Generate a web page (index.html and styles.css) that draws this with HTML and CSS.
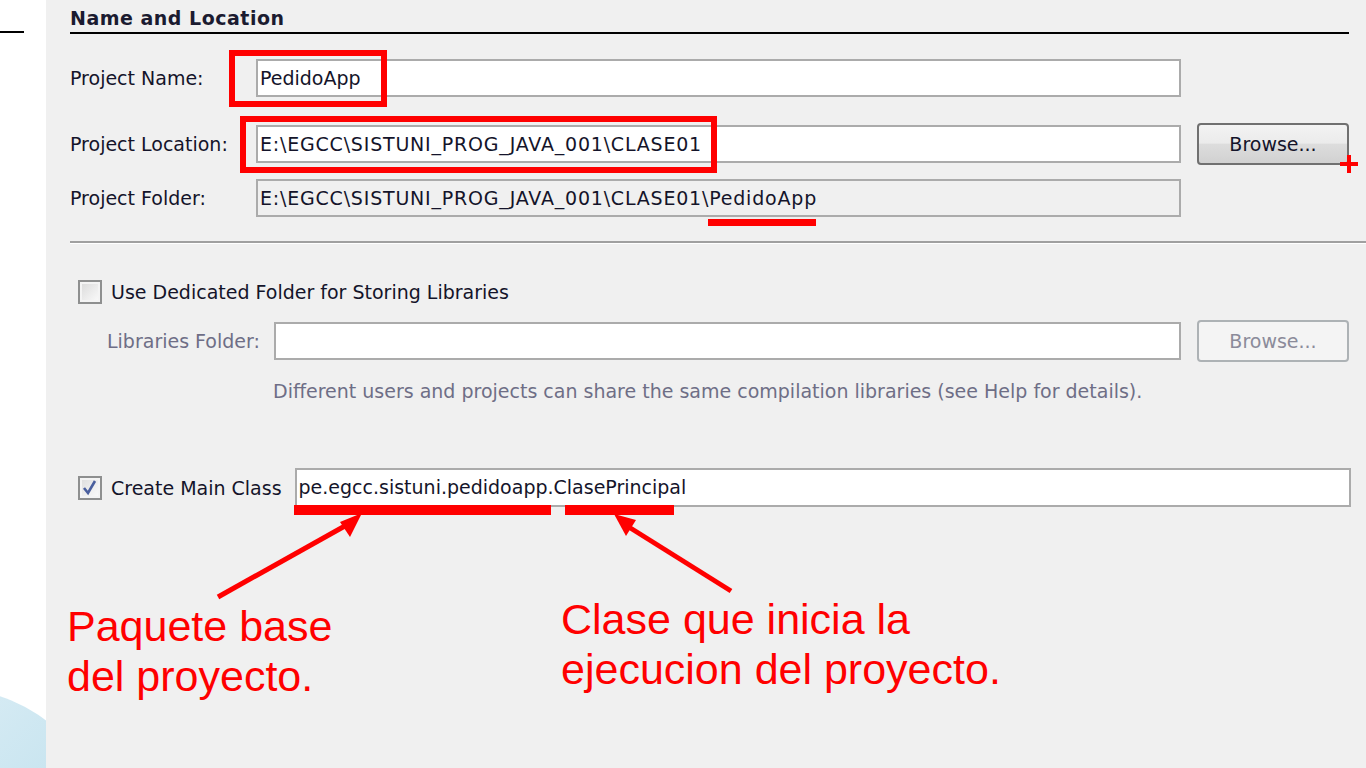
FILE: index.html
```html
<!DOCTYPE html>
<html>
<head>
<meta charset="utf-8">
<link rel="stylesheet" href="styles.css">
</head>
<body>
<div class="strip">
  <div class="strip-line"></div>
  <div class="bubble"></div>
</div>
<div class="panel">
  <div class="heading">Name and Location</div>

  <div class="row row-name">
    <label class="lbl">Project Name:</label>
    <div class="field">PedidoApp</div>
    <div class="side"></div>
  </div>

  <div class="row row-loc">
    <label class="lbl">Project Location:</label>
    <div class="field path">E:\EGCC\SISTUNI_PROG_JAVA_001\CLASE01</div>
    <div class="side"><button class="btn">Browse...</button></div>
  </div>

  <div class="row row-folder">
    <label class="lbl">Project Folder:</label>
    <div class="field field-ro path">E:\EGCC\SISTUNI_PROG_JAVA_001\CLASE01\PedidoApp</div>
    <div class="side"></div>
  </div>

  <div class="sep"></div>

  <div class="check-row row-ded">
    <span class="cb"></span>
    <span class="cb-label">Use Dedicated Folder for Storing Libraries</span>
  </div>

  <div class="row row-lib">
    <label class="lbl lbl-dis">Libraries Folder:</label>
    <div class="field"></div>
    <div class="side"><button class="btn btn-dis">Browse...</button></div>
  </div>

  <div class="desc">Different users and projects can share the same compilation libraries (see Help for details).</div>

  <div class="check-row row-main">
    <span class="cb cb-on"><svg viewBox="0 0 20 20" width="20" height="20"><path d="M4 10 L8 15 L15 3" fill="none" stroke="#4a5f9e" stroke-width="2.6"/></svg></span>
    <span class="cb-label">Create Main Class</span>
    <div class="field field-main">pe.egcc.sistuni.pedidoapp.ClasePrincipal</div>
  </div>

  <div class="note note-pkg">Paquete base<br>del proyecto.</div>
  <div class="note note-cls">Clase que inicia la<br>ejecucion del proyecto.</div>
</div>

<div class="mark box-name"></div>
<div class="mark box-loc"></div>
<div class="mark bar bar-folder"></div>
<div class="mark bar bar-pkg"></div>
<div class="mark bar bar-cls"></div>
<div class="mark plus-h"></div>
<div class="mark plus-v"></div>
<svg class="arrows" width="1366" height="768" viewBox="0 0 1366 768">
  <line x1="218" y1="597" x2="352" y2="522" stroke="#ff0000" stroke-width="5"/>
  <polygon points="362,513 340,522 350,537" fill="#ff0000"/>
  <line x1="731" y1="591" x2="624" y2="524" stroke="#ff0000" stroke-width="5"/>
  <polygon points="614,514 626,536 636,520" fill="#ff0000"/>
</svg>
</body>
</html>
```
FILE: styles.css
```css
html, body {
  margin: 0;
  padding: 0;
}
body {
  width: 1366px;
  height: 768px;
  overflow: hidden;
  display: flex;
  position: relative;
  font-family: "DejaVu Sans", "Liberation Sans", sans-serif;
  font-size: 19px;
  color: #14142a;
  background: #f0f0f0;
}
.strip {
  width: 46px;
  flex: none;
  background: #fff;
  position: relative;
  overflow: hidden;
}
.strip-line {
  margin-top: 31px;
  width: 24px;
  height: 2px;
  background: #000;
}
.bubble {
  position: absolute;
  left: -196px;
  top: 689px;
  width: 300px;
  height: 300px;
  border-radius: 50%;
  background: linear-gradient(135deg, #e6f2f8 0%, #c9e5f0 55%, #b7dbea 100%);
}
.panel {
  flex: 1;
  background: #f0f0f0;
  padding: 0 17px 0 24px;
  display: flex;
  flex-direction: column;
  position: relative;
}
.heading {
  height: 32px;
  line-height: 36px;
  border-bottom: 2px solid #000;
  font-weight: bold;
  letter-spacing: 0.5px;
  color: #1b1b30;
  box-sizing: content-box;
}
.row {
  display: flex;
  align-items: center;
  height: 38px;
}
.row-name { margin-top: 25px; }
.row-loc { margin-top: 28px; }
.row-folder { margin-top: 16px; }
.lbl {
  width: 186px;
  flex: none;
  white-space: nowrap;
}
.lbl-dis {
  color: #6e6e86;
  width: 167px;
  padding-left: 37px;
}
.field {
  flex: 1;
  height: 38px;
  box-sizing: border-box;
  border: 2px solid #ababab;
  background: #fff;
  padding: 0 0 0 2px;
  line-height: 34px;
  white-space: nowrap;
  overflow: hidden;
}
.path {
  letter-spacing: 0.8px;
}
.field-ro {
  background: #f0f0f0;
}
.side {
  width: 168px;
  flex: none;
  display: flex;
  justify-content: flex-end;
}
.btn {
  width: 152px;
  height: 42px;
  box-sizing: border-box;
  border: 2px solid #707070;
  border-radius: 4px;
  background: linear-gradient(#f3f3f3 0%, #ebebeb 48%, #dddddd 50%, #d1d1d1 100%);
  font: inherit;
  color: #14142a;
  padding: 0;
  margin-top: -1px;
}
.btn-dis {
  border-color: #adb2b5;
  background: #f4f4f4;
  color: #8b8b9a;
}
.sep {
  margin-top: 24px;
  margin-right: -17px;
  height: 3px;
  box-sizing: border-box;
  border-top: 2px solid #a0a0a0;
  border-bottom: 1px solid #fff;
}
.check-row {
  display: flex;
  align-items: center;
  height: 24px;
  padding-left: 8px;
}
.row-ded { margin-top: 36px; }
.row-lib { margin-top: 18px; }
.cb {
  width: 24px;
  height: 24px;
  flex: none;
  box-sizing: border-box;
  border: 2px solid #8e8f8f;
  background: linear-gradient(135deg, #d9d9d9 0%, #eeeeee 60%, #fbfbfb 100%);
  box-shadow: inset 0 0 0 2px #f4f4f4;
  display: flex;
  align-items: center;
  justify-content: center;
}
.cb-on {
  background: linear-gradient(135deg, #dcdcdc 0%, #f0f0f0 60%, #fcfcfc 100%);
}
.cb-label {
  margin-left: 9px;
  white-space: nowrap;
}
.desc {
  margin-top: 16px;
  height: 30px;
  line-height: 30px;
  padding-left: 203px;
  color: #6e6e86;
  white-space: nowrap;
}
.row-main {
  margin-top: 62px;
  height: 39px;
}
.field-main {
  margin-left: 13px;
  margin-right: -2px;
  height: 39px;
}
.note {
  position: absolute;
  font-family: "Liberation Sans", Arial, sans-serif;
  font-size: 43px;
  line-height: 50px;
  color: #ff0000;
  white-space: nowrap;
}
.note-pkg { left: 21px; top: 601px; }
.note-cls { left: 515px; top: 594px; }
.mark {
  position: absolute;
  box-sizing: border-box;
}
.box-name {
  left: 229px;
  top: 50px;
  width: 158px;
  height: 57px;
  border: 6px solid #ff0000;
}
.box-loc {
  left: 240px;
  top: 116px;
  width: 477px;
  height: 57px;
  border: 6px solid #ff0000;
}
.bar { background: #ff0000; }
.bar-folder { left: 708px; top: 219px; width: 108px; height: 7px; }
.bar-pkg { left: 294px; top: 505px; width: 257px; height: 10px; }
.bar-cls { left: 565px; top: 505px; width: 109px; height: 10px; }
.plus-h { left: 1340px; top: 162px; width: 18px; height: 4px; background: #ff0000; }
.plus-v { left: 1347px; top: 155px; width: 4px; height: 18px; background: #ff0000; }
.arrows {
  position: absolute;
  left: 0;
  top: 0;
  pointer-events: none;
}
```
